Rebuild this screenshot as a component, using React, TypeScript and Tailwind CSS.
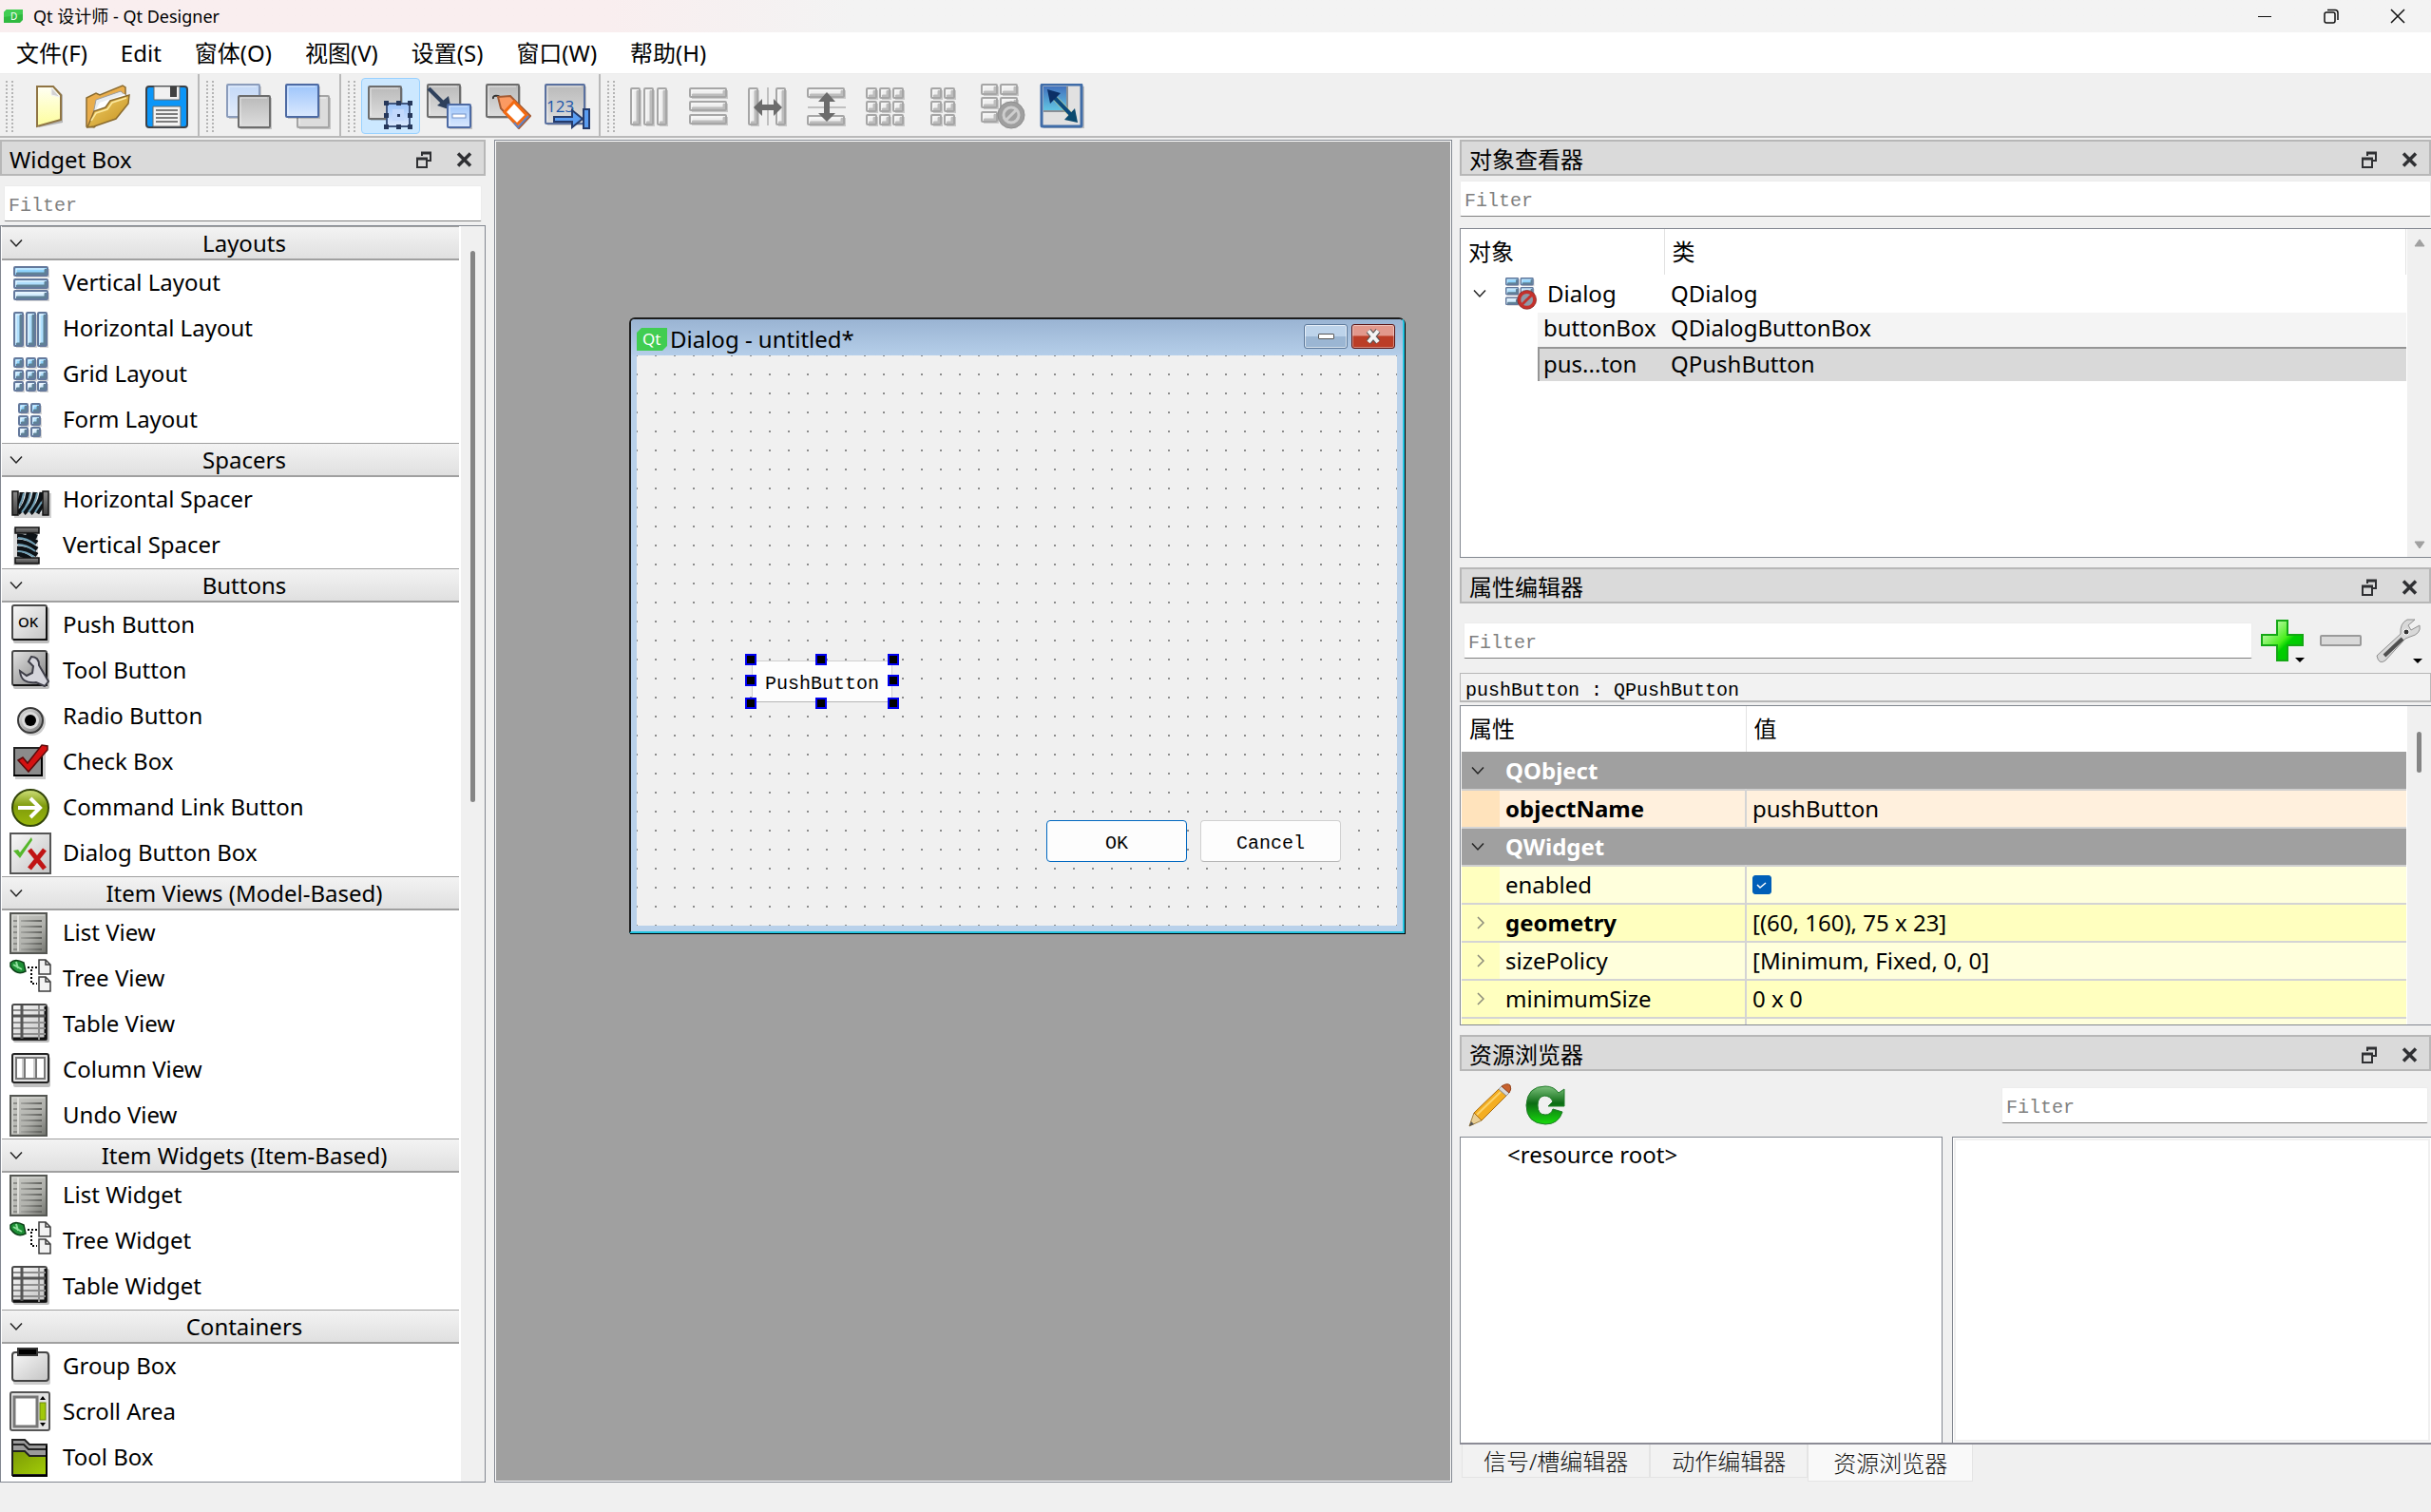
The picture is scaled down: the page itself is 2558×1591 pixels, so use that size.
import { useState } from "react";
import type { ReactNode } from "react";

type Rect = [number, number, number, number];

type Tone = "blue" | "gray";

const UI_FONT = "font-['Noto_Sans','Noto_Sans_CJK_SC',sans-serif]";
const MONO_FONT = "font-['Liberation_Mono','Noto_Sans_CJK_SC',monospace]";

function SharedGradients() {
  return (
    <svg className="absolute" width="0" height="0" aria-hidden="true">
      <defs>
        <linearGradient id="grayTile" x1="0" y1="0" x2="0" y2="1">
          <stop offset="0" stopColor="#b9b9b9" />
          <stop offset="1" stopColor="#dedede" />
        </linearGradient>
        <linearGradient id="blueTile" x1="0" y1="0" x2="0" y2="1">
          <stop offset="0" stopColor="#9cc4fb" />
          <stop offset="1" stopColor="#dbe9fe" />
        </linearGradient>
        <linearGradient id="paleBlueTile" x1="0" y1="0" x2="0" y2="1">
          <stop offset="0" stopColor="#c3d8f7" />
          <stop offset="1" stopColor="#e2ecfb" />
        </linearGradient>
        <linearGradient id="button" x1="0" y1="0" x2="1" y2="1">
          <stop offset="0" stopColor="#f8f8f8" />
          <stop offset="1" stopColor="#c4c4c4" />
        </linearGradient>
        <linearGradient id="darkButton" x1="0" y1="0" x2="1" y2="1">
          <stop offset="0" stopColor="#e4e4e4" />
          <stop offset="1" stopColor="#7d7d7d" />
        </linearGradient>
        <linearGradient id="paper" x1="0" y1="0" x2="0" y2="1">
          <stop offset="0" stopColor="#fffff4" />
          <stop offset="1" stopColor="#fdfd9b" />
        </linearGradient>
        <linearGradient id="folder" x1="0" y1="0" x2="1" y2="1">
          <stop offset="0" stopColor="#f2d16b" />
          <stop offset="1" stopColor="#c48f1c" />
        </linearGradient>
        <linearGradient id="listFill" x1="0" y1="0" x2="1" y2="1">
          <stop offset="0" stopColor="#c9cac5" />
          <stop offset="0.6" stopColor="#b0b1ac" />
          <stop offset="1" stopColor="#70726c" />
        </linearGradient>
        <linearGradient id="listLine" x1="0" y1="0" x2="1" y2="0">
          <stop offset="0" stopColor="#a2a39f" />
          <stop offset="1" stopColor="#5f605c" />
        </linearGradient>
        <linearGradient id="olive" x1="0" y1="0" x2="1" y2="1">
          <stop offset="0" stopColor="#7b9a06" />
          <stop offset="1" stopColor="#a3cd07" />
        </linearGradient>
        <linearGradient id="orb" x1="0" y1="0" x2="0" y2="1">
          <stop offset="0" stopColor="#cfe07a" />
          <stop offset="0.45" stopColor="#7f9b0c" />
          <stop offset="1" stopColor="#9ab80b" />
        </linearGradient>
        <linearGradient id="plus" x1="0" y1="0" x2="1" y2="1">
          <stop offset="0.1" stopColor="#d4fbc4" />
          <stop offset="0.5" stopColor="#48ee1b" />
          <stop offset="0.6" stopColor="#00cf00" />
          <stop offset="1" stopColor="#00c000" />
        </linearGradient>
        <linearGradient id="reload" x1="0" y1="0" x2="0" y2="1">
          <stop offset="0" stopColor="#7cc07c" />
          <stop offset="0.45" stopColor="#0c6c14" />
          <stop offset="1" stopColor="#18dc0c" />
        </linearGradient>
        <linearGradient id="steel" x1="0" y1="0" x2="0" y2="1">
          <stop offset="0" stopColor="#8a8a8a" />
          <stop offset="1" stopColor="#404040" />
        </linearGradient>
        <linearGradient id="sky" x1="0" y1="0" x2="0" y2="1">
          <stop offset="0" stopColor="#4272bd" />
          <stop offset="1" stopColor="#63c7e4" />
        </linearGradient>
      </defs>
    </svg>
  );
}

/* Bevelled cells used by all the layout icons */
function Cells({ rects, tone }: { rects: Rect[]; tone: Tone }) {
  const blue = tone === "blue";
  return (
    <>
      {rects.map(([x, y, w, h]) => {
        const fill = blue ? (y < 14 && h < 20 ? "#8fd4fd" : y < 26 ? "#afdffd" : "#d4edfe") : "#efefef";
        return (
          <g key={`${x}-${y}`}>
            <rect x={x + 2} y={y + 2} width={w} height={h} fill="#000" opacity="0.16" />
            <rect x={x} y={y} width={w} height={h} rx="1" fill={fill} />
            <path
              d={`M${x + 2} ${y + h - 2}H${x + w - 2}V${y + 2}`}
              fill="none"
              stroke={blue ? "#5f8196" : "#bcbcbc"}
              strokeWidth="3"
            />
            <path
              d={`M${x + 2} ${y + h - 3}V${y + 2}H${x + w - 3}`}
              fill="none"
              stroke="#fff"
              strokeWidth="1"
              opacity="0.8"
            />
            <rect
              x={x}
              y={y}
              width={w}
              height={h}
              rx="1"
              fill="none"
              stroke={blue ? "#64799c" : "#a6a6a6"}
              strokeWidth="2"
            />
          </g>
        );
      })}
    </>
  );
}

function grid(xs: number[], ys: number[], w: number, h: number): Rect[] {
  return ys.flatMap((y) => xs.map((x): Rect => [x, y, w, h]));
}

function Tile({ x, y, s, fill, stroke }: { x: number; y: number; s: number; fill: string; stroke: string }) {
  return (
    <>
      <rect x={x + 3} y={y + 3} width={s - 2} height={s - 2} fill="#000" opacity="0.18" />
      <rect x={x + 1} y={y + 1} width={s - 2} height={s - 2} rx="1" fill={fill} stroke={stroke} strokeWidth="2" />
      <path d={`M${x + 3} ${y + s - 4}V${y + 3}H${x + s - 4}`} fill="none" stroke="#fff" opacity="0.6" />
    </>
  );
}

const toolIcons: Record<string, ReactNode> = {
  new: (
    <>
      <path d="M14 5H32L39 12V41L14 46Z" fill="#000" opacity="0.25" />
      <path d="M12 3H29L37 12V38L12 45Z" fill="url(#paper)" stroke="#8f7443" strokeWidth="2" />
      <path d="M27 4V12L36 14Z" fill="#d2d2d2" stroke="#f4f4f4" />
    </>
  ),
  open: (
    <>
      <path d="M2 45V15L12 10L16 12L40 2L43 4V12L10 46Z" fill="#e9ad4c" stroke="#8a6b2f" strokeWidth="1.5" />
      <path d="M9 32L12 17L38 8L44 13L40 20Z" fill="#e8ecf0" stroke="#9b9b9b" />
      <path d="M11 29L16 20L42 11L44 14Z" fill="#fff" />
      <path d="M3 46L10 29L22 25L27 18L47 12L46 21L33 37L10 45Z" fill="url(#folder)" stroke="#8a6b2f" strokeWidth="1.5" />
      <path d="M7 39L12 31L24 27L29 20L44 15" fill="none" stroke="#fbe9a0" strokeWidth="1.5" />
    </>
  ),
  save: (
    <>
      <rect x="3" y="3" width="43" height="43" rx="3" fill="#0c96f8" stroke="#3c4147" strokeWidth="2" />
      <path d="M11 3H38V17H11Z" fill="#f1f1f1" stroke="#6b6b6b" />
      <rect x="28" y="3" width="7" height="11" fill="#414141" />
      <path d="M10 24H39V45H10Z" fill="#f3f3f3" stroke="#6b6b6b" />
      <path d="M13 28H36M13 32H36M13 36H36M13 40H36" stroke="#555" strokeWidth="1.5" />
    </>
  ),
  lower: (
    <>
      <Tile x={0} y={0} s={36} fill="url(#paleBlueTile)" stroke="#8b9cbb" />
      <Tile x={12} y={12} s={35} fill="url(#grayTile)" stroke="#6d6d6d" />
    </>
  ),
  raise: (
    <>
      <Tile x={12} y={12} s={35} fill="#dcdcdc" stroke="#a5a5a5" />
      <Tile x={0} y={0} s={36} fill="url(#blueTile)" stroke="#4d6aa3" />
    </>
  ),
  widgets: (
    <>
      <Tile x={0} y={2} s={36} fill="url(#grayTile)" stroke="#6d6d6d" />
      <rect x="20" y="21" width="24" height="24" fill="url(#blueTile)" stroke="#3f567f" strokeWidth="2" />
      {[17, 30, 42].map((x) =>
        [18, 31, 43].map((y) => (
          <rect key={`${x}${y}`} x={x} y={y} width="5" height="5" fill="#26385b" />
        ))
      )}
      <rect x="26" y="27" width="12" height="12" fill="#c3d9fc" />
      <rect x="31" y="32" width="3" height="3" fill="#26385b" />
    </>
  ),
  signals: (
    <>
      <Tile x={0} y={0} s={36} fill="url(#grayTile)" stroke="#6d6d6d" />
      <path d="M2 5L17 20" stroke="#2e405c" strokeWidth="4" />
      <path d="M23 13L26 28L11 23Z" fill="#2e405c" />
      <Tile x={21} y={21} s={26} fill="url(#blueTile)" stroke="#4d6aa3" />
      <rect x="27" y="32" width="14" height="4" fill="#fff" stroke="#7292c8" />
    </>
  ),
  buddies: (
    <>
      <Tile x={0} y={0} s={36} fill="url(#grayTile)" stroke="#6d6d6d" />
      <path d="M8 16Q7 12 13 13Q18 15 20 21" fill="none" stroke="#333" strokeWidth="2" />
      <path d="M13 14L26 13L47 34L35 47L16 26Z" fill="#fb9a62" stroke="#a35a33" strokeWidth="2" />
      <path d="M30 19L43 33L33 43L20 30Z" fill="#fff" stroke="#f36a12" strokeWidth="3" />
      <path d="M45 34L34 46L30 41" fill="none" stroke="#5f83c4" strokeWidth="2" />
    </>
  ),
  tabs: (
    <>
      <Tile x={0} y={0} s={43} fill="url(#grayTile)" stroke="#59709f" />
      <text x="2" y="30" fontSize="17" fontFamily="Open Sans" fill="#1a55a9">
        123
      </text>
      <path d="M10 35H29V28L40 37L29 46V40H10Z" fill="#5a9df2" stroke="#243b6c" strokeWidth="2" />
      <rect x="41" y="27" width="6" height="20" fill="#5a9df2" stroke="#243b6c" strokeWidth="2" />
    </>
  ),
  horizontal: <Cells tone="gray" rects={grid([4, 18, 32], [5], 9, 38)} />,
  vertical: <Cells tone="gray" rects={grid([4], [5, 19, 33], 38, 9)} />,
  splitH: (
    <>
      <Cells tone="gray" rects={grid([4, 33], [5], 9, 38)} />
      <path d="M24 4V44" stroke="#8f8f8f" />
      <path d="M9 25L18 16V22H30V16L39 25L30 34V28H18V34Z" fill="#6b6b6b" />
    </>
  ),
  splitV: (
    <>
      <Cells tone="gray" rects={grid([4], [5, 34], 38, 9)} />
      <path d="M4 25H44" stroke="#8f8f8f" />
      <path d="M24 9L33 19H27V31H33L24 40L15 31H21V19H15Z" fill="#6b6b6b" />
    </>
  ),
  gridLayout: <Cells tone="gray" rects={grid([4, 18, 32], [5, 19, 33], 10, 10)} />,
  formLayout: <Cells tone="gray" rects={grid([10, 24], [5, 19, 33], 10, 10)} />,
  breakLayout: (
    <>
      <Cells tone="gray" rects={[[1, 1, 16, 10], [21, 1, 17, 10], [1, 15, 16, 10], [21, 15, 17, 10], [1, 30, 16, 10]]} />
      <circle cx="32" cy="33" r="14" fill="#9f9f9f" stroke="#8e8e8e" />
      <circle cx="32" cy="33" r="8" fill="none" stroke="#cdcdcd" strokeWidth="3" />
      <path d="M26 39L38 27" stroke="#cdcdcd" strokeWidth="3" />
    </>
  ),
  adjust: (
    <>
      <rect x="4" y="3" width="43" height="44" fill="#000" opacity="0.2" />
      <rect x="2" y="1" width="42" height="44" rx="1" fill="#e1e1e1" stroke="#3f6ca8" strokeWidth="3" />
      <rect x="4" y="3" width="25" height="26" fill="url(#sky)" />
      <path d="M29 3V29H4" fill="none" stroke="#8a8f96" strokeWidth="2" />
      <path d="M12 11L37 37" stroke="#e7e07a" strokeWidth="6" opacity="0.5" />
      <path d="M12 11L37 37" stroke="#0b4a7e" strokeWidth="4" />
      <path d="M8 6L22 10L11 21Z" fill="#0c2f66" />
      <path d="M40 41L26 38L37 26Z" fill="#0b4a6e" />
    </>
  ),
};

const listIcon = (
  <>
    <rect x="1" y="1" width="38" height="42" fill="url(#listFill)" stroke="#555753" strokeWidth="2" />
    <path d="M3 41V3H37" fill="none" stroke="#dcddd9" />
    <path d="M4 9H8M4 15H8M4 21H8M4 27H8M4 33H8M4 39H8" stroke="#8b8c88" strokeWidth="2" />
    <path d="M12 9.1L34 9M12 15.1L34 15M12 21.1L34 21M12 27.1L34 27M12 33.1L34 33M12 39.1L34 39" stroke="url(#listLine)" strokeWidth="2" />
    <path d="M9 3V41" stroke="#e8e9e5" strokeWidth="1.5" />
  </>
);

const treeIcon = (
  <>
    <path d="M1 5Q6 0 15 5L17 14Q8 19 1 9Z" fill="#1d8f35" stroke="#0c3f17" strokeWidth="1.5" />
    <path d="M4 7L13 12M7 4L9 11" stroke="#8fe09c" strokeWidth="2" />
    <path d="M19 10H29M23 12V27H29" fill="none" stroke="#000" strokeWidth="2" strokeDasharray="2 2" />
    <path d="M31 2H38L43 7V17H31Z" fill="#f2f2f2" stroke="#3d3d3d" strokeWidth="1.5" />
    <path d="M31 20H38L43 25V35H31Z" fill="#f2f2f2" stroke="#3d3d3d" strokeWidth="1.5" />
    <path d="M38 2V7H43M38 20V25H43" fill="none" stroke="#3d3d3d" strokeWidth="1.5" />
  </>
);

const tableIcon = (
  <>
    <rect x="4" y="3" width="38" height="38" rx="2" fill="#000" opacity="0.25" />
    <rect x="3" y="1" width="36" height="37" rx="2" fill="url(#button)" stroke="#4a4a4a" strokeWidth="2" />
    <path d="M4 37H38V3" fill="none" stroke="#111" strokeWidth="3" />
    <path d="M4 7H38M4 20H38M4 26H38M4 32H38M31 2V38" stroke="#8d8d8d" strokeWidth="2" />
    <path d="M13 2V37M4 13H38" stroke="#555" strokeWidth="3" />
  </>
);

const widgetIcons: Record<string, ReactNode> = {
  vertical: <Cells tone="blue" rects={grid([5], [5, 18, 30], 35, 9)} />,
  horizontal: <Cells tone="blue" rects={grid([5, 18, 30], [5], 9, 35)} />,
  grid: <Cells tone="blue" rects={grid([5, 18, 30], [5, 18, 30], 9, 9)} />,
  form: <Cells tone="blue" rects={grid([10, 23], [5, 18, 30], 9, 9)} />,
  hspacer: (
    <>
      <rect x="5" y="15" width="39" height="26" fill="#000" opacity="0.18" />
      <path d="M9 14H35V36H9Z" fill="#e8eef1" />
      <path
        d="M9 28Q13 20 13 14M9 36Q18 28 20 14M15 36Q25 28 27 14M22 36Q32 28 34 14M29 36L35 26"
        fill="none"
        stroke="#0d1216"
        strokeWidth="5"
      />
      <path
        d="M10 29Q14 22 15 15M13 35Q20 27 22 15M20 35Q27 27 29 15M27 35L34 24"
        fill="none"
        stroke="#6f9fb5"
        strokeWidth="2"
      />
      <rect x="3" y="13" width="6" height="25" fill="url(#steel)" stroke="#111" strokeWidth="1.5" />
      <rect x="35" y="13" width="6" height="25" fill="url(#steel)" stroke="#111" strokeWidth="1.5" />
    </>
  ),
  vspacer: (
    <>
      <rect x="4" y="4" width="26" height="39" fill="#000" opacity="0.14" />
      <path d="M8 9H29V35H8Z" fill="#e8eef1" />
      <path
        d="M8 12Q18 12 29 19M8 18Q18 18 29 26M8 25Q18 25 29 32M8 31Q14 31 22 36M18 9L29 13"
        fill="none"
        stroke="#0d1216"
        strokeWidth="5"
      />
      <path d="M9 14Q18 14 27 21M9 21Q18 21 27 28M9 28Q17 28 26 34" fill="none" stroke="#6f9fb5" strokeWidth="2" />
      <rect x="6" y="3" width="25" height="6" fill="url(#steel)" stroke="#111" strokeWidth="1.5" />
      <rect x="6" y="35" width="25" height="6" fill="url(#steel)" stroke="#111" strokeWidth="1.5" />
    </>
  ),
  push: (
    <>
      <rect x="4" y="3" width="38" height="38" rx="2" fill="#000" opacity="0.25" />
      <rect x="3" y="1" width="36" height="36" rx="2" fill="url(#button)" stroke="#4a4a4a" strokeWidth="2" />
      <path d="M4 37H39V3" fill="none" stroke="#111" strokeWidth="2" />
      <text x="9" y="24" fontSize="15" fontFamily="Noto Sans" fontWeight="500" fill="#000">
        OK
      </text>
    </>
  ),
  tool: (
    <>
      <rect x="4" y="3" width="38" height="38" rx="2" fill="#000" opacity="0.25" />
      <rect x="3" y="1" width="36" height="36" rx="2" fill="url(#darkButton)" stroke="#4a4a4a" strokeWidth="2" />
      <path d="M4 37H39V3" fill="none" stroke="#111" strokeWidth="2" />
      <path
        d="M23 7Q31 7 31 16L41 33L37 38L28 34Q12 36 11 22L18 27L24 24L25 17L20 12Z"
        fill="#d5d5dc"
        stroke="#3e3e48"
        strokeWidth="2"
      />
    </>
  ),
  radio: (
    <>
      <circle cx="24" cy="28" r="14" fill="#000" opacity="0.2" />
      <circle cx="22" cy="26" r="13" fill="url(#darkButton)" stroke="#3a3a3a" strokeWidth="2" />
      <circle cx="22" cy="26" r="9" fill="#dcdcdc" />
      <circle cx="22" cy="26" r="6" fill="#000" />
    </>
  ),
  check: (
    <>
      <rect x="6" y="8" width="32" height="32" fill="#000" opacity="0.2" />
      <rect x="5" y="7" width="29" height="29" fill="#8b8b8b" stroke="#222" strokeWidth="2" />
      <path d="M4 36H34V8" fill="none" stroke="#000" strokeWidth="2" />
      <path d="M9 20L14 17L19 23L34 4L40 5L40 9L20 32Z" fill="#d41111" stroke="#5a0a0a" strokeWidth="1.5" />
    </>
  ),
  command: (
    <>
      <circle cx="22" cy="22" r="19" fill="url(#orb)" stroke="#33450a" strokeWidth="2" />
      <path d="M9 22H31M22 12L32 22L22 32" fill="none" stroke="#fff" strokeWidth="4" />
    </>
  ),
  dialogButtons: (
    <>
      <rect x="1" y="1" width="42" height="42" fill="url(#button)" stroke="#555" strokeWidth="2" />
      <path d="M4 19L9 18L11 21L23 5L24 8L11 27Z" fill="#55b72a" />
      <path d="M21 18L37 38M37 18L21 38" stroke="#c01414" strokeWidth="5" />
    </>
  ),
  list: listIcon,
  tree: treeIcon,
  table: tableIcon,
  column: (
    <>
      <rect x="4" y="8" width="39" height="32" rx="2" fill="#000" opacity="0.25" />
      <rect x="3" y="5" width="38" height="30" rx="2" fill="#e2e2e2" stroke="#222" strokeWidth="2" />
      <rect x="7" y="9" width="30" height="22" fill="#fff" stroke="#777" strokeWidth="2" />
      <path d="M16 9V31M28 9V31" stroke="#777" strokeWidth="2" />
      <path d="M14 10V30M26 10V30" stroke="#ccc" strokeWidth="2" />
    </>
  ),
  group: (
    <>
      <rect x="4" y="9" width="39" height="32" rx="2" fill="#000" opacity="0.2" />
      <rect x="3" y="7" width="38" height="30" rx="3" fill="url(#button)" stroke="#444" strokeWidth="2" />
      <path d="M9 3H29V10H9Z" fill="#000" stroke="#333" strokeWidth="2" />
    </>
  ),
  scroll: (
    <>
      <rect x="1" y="1" width="41" height="40" rx="2" fill="#e2e2e2" stroke="#555" strokeWidth="2" />
      <rect x="5" y="6" width="24" height="31" fill="#fff" stroke="#777" strokeWidth="3" />
      <path d="M35 5L38 9H32ZM35 37L38 33H32Z" fill="#000" />
      <rect x="32" y="12" width="6" height="18" fill="#a0c80a" stroke="#6d8708" />
    </>
  ),
  toolbox: (
    <>
      <path d="M3 3H16L21 8H39V20H3Z" fill="#9b9b9b" stroke="#222" strokeWidth="2" />
      <path d="M3 8H15L20 13H39" fill="none" stroke="#222" strokeWidth="2" />
      <path d="M3 15H16L21 20H39V40H3Z" fill="url(#olive)" stroke="#222" strokeWidth="2" />
      <path d="M3 41H39V9" fill="none" stroke="#000" strokeWidth="2" />
    </>
  ),
};

const menus = ["文件(F)", "Edit", "窗体(O)", "视图(V)", "设置(S)", "窗口(W)", "帮助(H)"];

const toolbars = [
  [
    { icon: "new", label: "New" },
    { icon: "open", label: "Open" },
    { icon: "save", label: "Save" },
  ],
  [
    { icon: "lower", label: "Send to Back" },
    { icon: "raise", label: "Bring to Front" },
  ],
  [
    { icon: "widgets", label: "Edit Widgets", checked: true },
    { icon: "signals", label: "Edit Signals/Slots" },
    { icon: "buddies", label: "Edit Buddies" },
    { icon: "tabs", label: "Edit Tab Order" },
  ],
  [
    { icon: "horizontal", label: "Lay Out Horizontally" },
    { icon: "vertical", label: "Lay Out Vertically" },
    { icon: "splitH", label: "Lay Out Horizontally in Splitter" },
    { icon: "splitV", label: "Lay Out Vertically in Splitter" },
    { icon: "gridLayout", label: "Lay Out in a Grid" },
    { icon: "formLayout", label: "Lay Out in a Form" },
    { icon: "breakLayout", label: "Break Layout" },
    { icon: "adjust", label: "Adjust Size" },
  ],
];

const widgetGroups = [
  {
    title: "Layouts",
    items: [
      ["vertical", "Vertical Layout"],
      ["horizontal", "Horizontal Layout"],
      ["grid", "Grid Layout"],
      ["form", "Form Layout"],
    ],
  },
  {
    title: "Spacers",
    items: [
      ["hspacer", "Horizontal Spacer"],
      ["vspacer", "Vertical Spacer"],
    ],
  },
  {
    title: "Buttons",
    items: [
      ["push", "Push Button"],
      ["tool", "Tool Button"],
      ["radio", "Radio Button"],
      ["check", "Check Box"],
      ["command", "Command Link Button"],
      ["dialogButtons", "Dialog Button Box"],
    ],
  },
  {
    title: "Item Views (Model-Based)",
    items: [
      ["list", "List View"],
      ["tree", "Tree View"],
      ["table", "Table View"],
      ["column", "Column View"],
      ["list", "Undo View"],
    ],
  },
  {
    title: "Item Widgets (Item-Based)",
    items: [
      ["list", "List Widget"],
      ["tree", "Tree Widget"],
      ["table", "Table Widget"],
    ],
  },
  {
    title: "Containers",
    items: [
      ["group", "Group Box"],
      ["scroll", "Scroll Area"],
      ["toolbox", "Tool Box"],
    ],
  },
];

const bottomTabs = ["信号/槽编辑器", "动作编辑器", "资源浏览器"];

function ChevronDown() {
  return (
    <svg width="14" height="10" viewBox="0 0 14 10" aria-hidden="true">
      <path d="M1 1.5L7 8L13 1.5" fill="none" stroke="#222" strokeWidth="1.5" />
    </svg>
  );
}

function ChevronRight() {
  return (
    <svg width="8" height="14" viewBox="0 0 8 14" aria-hidden="true">
      <path d="M1 1L7 7L1 13" fill="none" stroke="#8a8a7a" strokeWidth="1.5" />
    </svg>
  );
}

function DockTitle({ title }: { title: string }) {
  return (
    <div className="flex h-[38px] shrink-0 items-center border-2 border-[#b7b7b7] bg-[#dadada] pt-[3px] pr-3 pl-2">
      <h2 className="flex-1 text-2xl leading-8">{title}</h2>
      <button aria-label={`Float ${title}`} className="mr-[25px]">
        <svg width="17" height="18" viewBox="0 0 17 18" aria-hidden="true">
          <path d="M6 5V2H15V10H12" fill="none" stroke="#2f3033" strokeWidth="2" />
          <path d="M5 2H16" stroke="#2f3033" strokeWidth="3" />
          <rect x="1" y="8" width="10" height="9" fill="none" stroke="#2f3033" strokeWidth="2" />
          <path d="M0 8H12" stroke="#2f3033" strokeWidth="3" />
        </svg>
      </button>
      <button aria-label={`Close ${title}`}>
        <svg width="17" height="16" viewBox="0 0 17 16" aria-hidden="true">
          <path d="M2 1.5L15 14.5M15 1.5L2 14.5" stroke="#2f3033" strokeWidth="3.5" />
        </svg>
      </button>
    </div>
  );
}

function FilterInput({ label, className = "" }: { label: string; className?: string }) {
  const [value, setValue] = useState("");

  return (
    <input
      type="text"
      aria-label={label}
      placeholder="Filter"
      value={value}
      onChange={(e) => setValue(e.target.value)}
      className={`h-[38px] min-w-0 rounded-[2px] border border-[#ececec] border-b-[#808080] bg-white px-1 pt-[5px] text-xl placeholder:text-[#808080] ${MONO_FONT} ${className}`}
    />
  );
}

function TitleBar() {
  return (
    <header className="flex h-[34px] shrink-0 items-center bg-[#f3f3f3] bg-linear-to-r from-[#f9eeef] from-0% via-[#f9eeef] via-25% to-[#f3f3f3] to-35% pl-1">
      <svg width="20" height="14" viewBox="0 0 20 14" aria-hidden="true">
        <path d="M3 0H20V11L17 14H0V3Z" fill="#2fb93f" />
        <path d="M3 0H20V5L0 8V3Z" fill="#41cd52" />
        <text x="7" y="11" fontSize="10" fontFamily="Noto Sans" fill="#fff">
          D
        </text>
      </svg>
      <h1 className="ml-[11px] flex-1 text-lg">Qt 设计师 - Qt Designer</h1>
      <div className="flex h-full items-center">
        <button aria-label="Minimize" className="flex h-full w-[70px] items-center justify-center">
          <svg width="14" height="14" viewBox="0 0 14 14" aria-hidden="true">
            <path d="M0 7.5H14" stroke="#111" />
          </svg>
        </button>
        <button aria-label="Restore" className="flex h-full w-[70px] items-center justify-center">
          <svg width="16" height="16" viewBox="0 0 16 16" aria-hidden="true">
            <rect x="1" y="4" width="11" height="11" rx="2" fill="none" stroke="#111" strokeWidth="1.5" />
            <path d="M4 1.5H12Q15 1.5 15 4.5V12" fill="none" stroke="#111" strokeWidth="1.5" />
          </svg>
        </button>
        <button aria-label="Close" className="flex h-full w-[70px] items-center justify-center">
          <svg width="16" height="16" viewBox="0 0 16 16" aria-hidden="true">
            <path d="M1 1L15 15M15 1L1 15" stroke="#111" strokeWidth="1.5" />
          </svg>
        </button>
      </div>
    </header>
  );
}

function ToolBars() {
  return (
    <div className="flex h-[67px] shrink-0 border-b-2 border-[#b9b9b9]">
      {toolbars.map((bar, i) => (
        <div
          key={i}
          role="toolbar"
          className={`flex items-center pt-[2px] pl-[6px] ${
            i < toolbars.length - 1 ? "mr-px border-r-2 border-[#b9b9b9] pr-[2px]" : "flex-1"
          }`}
        >
          <div className="mr-[6px] h-[54px] w-2 bg-[radial-gradient(circle_at_1px_1px,#b4b4b4_1px,transparent_1px)] bg-size-[6px_4px]" />
          {bar.map((tool) => (
            <button
              key={tool.icon}
              aria-label={tool.label}
              className={`flex h-[59px] w-[62px] items-center justify-center rounded-sm border ${
                "checked" in tool ? "border-[#99d1ff] bg-[#cce8ff]" : "border-transparent"
              }`}
            >
              <svg width="48" height="48" viewBox="0 0 48 48" aria-hidden="true">
                {toolIcons[tool.icon]}
              </svg>
            </button>
          ))}
        </div>
      ))}
    </div>
  );
}

function WidgetBox() {
  return (
    <aside className="flex w-[511px] shrink-0 flex-col">
      <DockTitle title="Widget Box" />
      <FilterInput label="Filter widgets" className="mx-1 mt-[10px]" />
      <div className="mt-[4px] flex min-h-0 flex-1 border border-[#828790] bg-white">
        <div className="flex-1 overflow-hidden pl-px">
          {widgetGroups.map((group) => (
            <section key={group.title}>
              <button className="flex h-9 w-full items-center border-t border-b-2 border-[#a0a0a0] bg-linear-to-b from-[#f3f3f3] to-[#e0e0e0] pl-2">
                <ChevronDown />
                <span className="flex-1 pl-[7px] text-center text-2xl leading-8">{group.title}</span>
              </button>
              <ul>
                {group.items.map(([icon, label]) => (
                  <li key={label} className="flex h-12 items-center gap-3 pl-2">
                    <svg width="44" height="44" viewBox="0 0 44 44" aria-hidden="true">
                      {widgetIcons[icon]}
                    </svg>
                    <span className="pb-[2px] text-2xl leading-8">{label}</span>
                  </li>
                ))}
              </ul>
            </section>
          ))}
        </div>
        <div className="ml-[2px] w-[25px] bg-[#f0f0f0] pt-[26px] pl-[10px]">
          <div className="h-[580px] w-[5px] rounded-full bg-[#858585]" />
        </div>
      </div>
    </aside>
  );
}

function Handle({ className }: { className: string }) {
  return <span className={`absolute size-3 border-2 border-[#0000f0] bg-black ${className}`} />;
}

function DesignForm() {
  return (
    <div className="absolute top-[186px] left-[141px] flex h-[648px] w-[816px] flex-col rounded-t-md border-2 border-[#1c1c1c] border-r-[#23c4e0] border-b-[#23c4e0] bg-[#b9d1ea] px-[6px] pb-[6px] shadow-[1px_1px_0_#000]">
      <div className="-mx-[6px] flex h-[38px] shrink-0 items-center rounded-t-sm bg-linear-to-b from-[#9ab4d3] to-[#b5cee9] px-[6px] pt-1">
        <svg width="32" height="24" viewBox="0 0 32 24" aria-hidden="true">
          <path d="M5 0H32V19L27 24H0V5Z" fill="#41cd52" />
          <text x="6" y="18" fontSize="17" fontFamily="Noto Sans" fill="#fff">
            Qt
          </text>
        </svg>
        <h2 className="ml-[3px] flex-1 text-2xl leading-8">Dialog - untitled*</h2>
        <div className="mr-[2px] flex gap-1 pb-[6px]">
          <button
            aria-label="Minimize form"
            className="flex h-[26px] w-[46px] items-center justify-center rounded-[3px] border border-[#5f7b9c] bg-linear-to-b from-[#bdd3ea] from-50% to-[#9bb6d3] to-50% inset-ring inset-ring-white/60"
          >
            <span className="h-[6px] w-[17px] rounded-[1px] border border-[#555] bg-white" />
          </button>
          <button
            aria-label="Close form"
            className="flex h-[26px] w-[46px] items-center justify-center rounded-[3px] border border-[#5a1414] bg-linear-to-b from-[#e2988c] from-45% to-[#bb3d27] to-50% inset-ring inset-ring-white/40"
          >
            <svg width="18" height="16" viewBox="0 0 18 16" aria-hidden="true">
              <path d="M4 2L14 14M14 2L4 14" stroke="#555" strokeWidth="6" />
              <path d="M4 2L14 14M14 2L4 14" stroke="#f4f4f4" strokeWidth="4" />
            </svg>
          </button>
        </div>
      </div>
      <div className={`relative flex-1 bg-[#f0f0f0] bg-[radial-gradient(circle,#8c8c8c_1px,transparent_1px)] bg-size-[20px_20px] bg-position-[-10px_-10px] text-xl ${MONO_FONT}`}>
        <div className="absolute top-[320px] left-[120px] h-[46px] w-[150px] p-[1px]">
          <button className="h-full w-full rounded-[3px] border border-[#d0d0d0] border-b-[#b5b5b5] bg-[#fdfdfd] pt-[6px]">PushButton</button>
          <Handle className="-top-[6px] -left-[6px]" />
          <Handle className="-top-[6px] left-[68px]" />
          <Handle className="-top-[6px] -right-[6px]" />
          <Handle className="top-4 -left-[6px]" />
          <Handle className="top-4 -right-[6px]" />
          <Handle className="-bottom-[6px] -left-[6px]" />
          <Handle className="-bottom-[6px] left-[68px]" />
          <Handle className="-right-[6px] -bottom-[6px]" />
        </div>
        <div className="absolute top-[489px] left-[431px] flex gap-[14px]">
          <button className="h-[44px] w-[148px] rounded-[4px] border border-[#0067c0] bg-[#fdfdfd] pt-[6px]">OK</button>
          <button className="h-[44px] w-[148px] rounded-[4px] border border-[#d0d0d0] border-b-[#b5b5b5] bg-[#fdfdfd] pt-[6px]">Cancel</button>
        </div>
      </div>
    </div>
  );
}

function ObjectInspector() {
  return (
    <section className="flex min-h-0 flex-[440_1_0%] flex-col">
      <DockTitle title="对象查看器" />
      <FilterInput label="Filter objects" className="mt-[5px]" />
      <div className="mt-[12px] flex min-h-0 flex-1 border border-r-0 border-[#828790] bg-white">
        <div className="flex-1 overflow-hidden">
          <table className="w-full table-fixed border-collapse text-left text-2xl leading-8">
            <colgroup>
              <col className="w-[214px]" />
              <col />
            </colgroup>
            <thead>
              <tr className="h-12">
                <th className="border-r border-[#e2e2e2] pl-2 font-normal">对象</th>
                <th className="border-r border-[#e2e2e2] pl-2 font-normal">类</th>
              </tr>
            </thead>
            <tbody>
              <tr className="h-10">
                <td className="p-0">
                  <div className="flex items-center pl-[13px]">
                    <ChevronDown />
                    <svg width="34" height="34" viewBox="0 0 48 48" className="mr-[10px] ml-[20px]" aria-hidden="true">
                      <Cells tone="blue" rects={[[1, 1, 18, 10], [23, 1, 18, 10], [1, 15, 18, 10], [23, 15, 18, 10], [1, 30, 18, 10]]} />
                      <circle cx="32" cy="33" r="14" fill="#c4302b" stroke="#7e2420" />
                      <circle cx="32" cy="33" r="9" fill="#8f9aa8" />
                      <path d="M25 40L39 26" stroke="#c4302b" strokeWidth="4" />
                    </svg>
                    Dialog
                  </div>
                </td>
                <td className="p-0 pl-[7px]">QDialog</td>
              </tr>
              <tr>
                <td className="p-0 pl-[81px]">
                  <div className="h-9 bg-[#f4f4f4] pl-[6px]">buttonBox</div>
                </td>
                <td className="p-0">
                  <div className="h-9 bg-[#f4f4f4] pl-[7px]">QDialogButtonBox</div>
                </td>
              </tr>
              <tr>
                <td className="p-0 pl-[81px]">
                  <div className="h-9 border-t-2 border-l-2 border-[#959595] bg-[#d9d9d9] pl-1">pus...ton</div>
                </td>
                <td className="p-0">
                  <div className="h-9 border-t-2 border-[#959595] bg-[#d9d9d9] pl-[7px]">QPushButton</div>
                </td>
              </tr>
            </tbody>
          </table>
        </div>
        <div className="ml-px flex w-[25px] flex-col items-center justify-between bg-[#f0f0f0] pt-[10px] pb-[8px]">
          <svg width="12" height="9" viewBox="0 0 12 9" aria-hidden="true">
            <path d="M6 1L11 8H1Z" fill="#a0a0a0" stroke="#a0a0a0" strokeLinejoin="round" />
          </svg>
          <svg width="12" height="9" viewBox="0 0 12 9" aria-hidden="true">
            <path d="M6 8L11 1H1Z" fill="#a0a0a0" stroke="#a0a0a0" strokeLinejoin="round" />
          </svg>
        </div>
      </div>
    </section>
  );
}

function DropArrow() {
  return (
    <svg width="10" height="5" viewBox="0 0 10 5" className="absolute right-0 bottom-0" aria-hidden="true">
      <path d="M0 0H10L5 5Z" fill="#000" />
    </svg>
  );
}

function GroupRow({ name }: { name: string }) {
  return (
    <tr className="h-10 border-b-2 border-[#cfcfcf] bg-[#a0a0a0]">
      <td className="p-0 pl-[10px]">
        <ChevronDown />
      </td>
      <td colSpan={2} className="p-0 pl-[6px] font-bold text-white">
        {name}
      </td>
    </tr>
  );
}

function PropertyRow({
  name,
  value,
  row,
  strip,
  bold = false,
  expandable = false,
}: {
  name: string;
  value: ReactNode;
  row: string;
  strip: string;
  bold?: boolean;
  expandable?: boolean;
}) {
  return (
    <tr className={`h-10 border-b-2 border-[#d4d4d4] ${row}`}>
      <td className={`p-0 pl-4 ${strip}`}>{expandable && <ChevronRight />}</td>
      <td className={`border-r-2 border-[#d4d4d4] p-0 pl-[6px] ${bold ? "font-bold" : ""}`}>{name}</td>
      <td className="p-0 pl-[6px]">{value}</td>
    </tr>
  );
}

function PropertyEditor() {
  const [enabled, setEnabled] = useState(true);

  return (
    <section className="flex min-h-0 flex-[482_1_0%] flex-col">
      <DockTitle title="属性编辑器" />
      <div className="flex h-[73px] shrink-0 items-center pt-[5px] pr-[9px] pl-1">
        <FilterInput label="Filter properties" className="mr-[9px] flex-1" />
        <button aria-label="Add Dynamic Property" className="relative mr-[16px]">
          <svg width="46" height="46" viewBox="0 0 46 46" aria-hidden="true">
            <path d="M17 2H28V17H44V28H28V44H17V28H1V17H17Z" fill="url(#plus)" stroke="#14a814" strokeWidth="2" />
          </svg>
          <DropArrow />
        </button>
        <button aria-label="Remove Dynamic Property" className="mr-[14px]">
          <svg width="44" height="12" viewBox="0 0 44 12" aria-hidden="true">
            <rect x="1" y="1" width="42" height="10" rx="1" fill="#d9d9d9" stroke="#9a9a9a" strokeWidth="2" />
          </svg>
        </button>
        <button aria-label="Configure Property Editor" className="relative">
          <svg width="50" height="48" viewBox="0 0 50 48" aria-hidden="true">
            <path
              d="M2 40L27 17Q26 6 34 2L42 2L35 8L38 13L47 8Q49 17 37 20L32 22L11 45Q4 50 2 40Z"
              fill="#d8d8d8"
              stroke="#8f8f8f"
            />
            <path d="M10 40L29 22" stroke="#505050" strokeWidth="4" />
            <circle cx="33" cy="15" r="3" fill="#333" stroke="#fff" />
          </svg>
          <DropArrow />
        </button>
      </div>
      <div className={`h-[31px] shrink-0 border border-b-2 border-[#b7b7b7] bg-[#f2f2f2] pt-1 pl-[5px] text-xl leading-7 ${MONO_FONT}`}>
        pushButton : QPushButton
      </div>
      <div className="mt-[3px] flex min-h-0 flex-1 border border-r-0 border-[#828790] bg-white">
        <div className="flex-1 overflow-hidden px-px">
          <table className="w-full table-fixed border-collapse text-left text-2xl leading-8">
            <colgroup>
              <col className="w-[40px]" />
              <col className="w-[259px]" />
              <col />
            </colgroup>
            <thead>
              <tr className="h-12">
                <th colSpan={2} className="border-r border-[#e2e2e2] p-0 pl-2 font-normal">
                  属性
                </th>
                <th className="p-0 pl-2 font-normal">值</th>
              </tr>
            </thead>
            <tbody>
              <GroupRow name="QObject" />
              <PropertyRow name="objectName" value="pushButton" row="bg-[#fff0dd]" strip="bg-[#ffe3bc]" bold />
              <GroupRow name="QWidget" />
              <PropertyRow
                name="enabled"
                value={
                  <label className="relative block size-5">
                    <input
                      type="checkbox"
                      aria-label="enabled"
                      checked={enabled}
                      onChange={(e) => setEnabled(e.target.checked)}
                      className="block size-5 appearance-none rounded-[3px] border border-[#868686] bg-white checked:border-[#005fb8] checked:bg-[#005fb8]"
                    />
                    <svg viewBox="0 0 20 20" className="pointer-events-none absolute inset-0" aria-hidden="true">
                      <path d="M5 10L8 13L14 8" fill="none" stroke="#fff" strokeWidth="1.5" />
                    </svg>
                  </label>
                }
                row="bg-[#ffffdc]"
                strip="bg-[#ffffbf]"
              />
              <PropertyRow name="geometry" value="[(60, 160), 75 x 23]" row="bg-[#ffffbf]" strip="bg-[#ffffbf]" bold expandable />
              <PropertyRow name="sizePolicy" value="[Minimum, Fixed, 0, 0]" row="bg-[#ffffdc]" strip="bg-[#ffffbf]" expandable />
              <PropertyRow name="minimumSize" value="0 x 0" row="bg-[#ffffbf]" strip="bg-[#ffffbf]" expandable />
              <PropertyRow name="" value="" row="bg-[#ffffdc]" strip="bg-[#ffffbf]" />
            </tbody>
          </table>
        </div>
        <div className="w-[25px] bg-[#f0f0f0] pt-[27px] pl-[10px]">
          <div className="h-[43px] w-[5px] rounded-full bg-[#858585]" />
        </div>
      </div>
    </section>
  );
}

function ResourceBrowser() {
  const [active, setActive] = useState("资源浏览器");

  return (
    <section className="flex min-h-0 flex-[471_1_0%] flex-col">
      <DockTitle title="资源浏览器" />
      <div className="flex h-[69px] shrink-0 items-center pt-[3px] pr-[3px] pl-[9px]">
        <button aria-label="Edit Resources" className="mr-[14px]">
          <svg width="46" height="46" viewBox="0 0 46 46" aria-hidden="true">
            <path d="M1 45L6 31L14 39Z" fill="#e9cf96" stroke="#a3803a" />
            <path d="M1 45L3 40L6 43Z" fill="#555" />
            <path d="M6 31L32 6L40 13L14 39Z" fill="#f4ae22" stroke="#a86c10" />
            <path d="M9 33L34 9" stroke="#fbd36b" strokeWidth="2" />
            <path d="M32 6L35 3L43 10L40 13Z" fill="#d9d9d9" stroke="#999" />
            <path d="M35 3Q41 -1 44 2Q46 6 43 10Z" fill="#c8622e" stroke="#93431c" />
          </svg>
        </button>
        <button aria-label="Reload" className="flex-1">
          <svg width="42" height="42" viewBox="0 0 42 42" aria-hidden="true">
            <path
              d="M41 4V22H24L29 17Q26 11 20 11Q13 12 13 21Q13 31 21 31Q27 31 29 25L39 28Q35 41 21 41Q1 40 1 21Q2 1 21 1Q30 1 35 8Z"
              fill="url(#reload)"
              stroke="#1f7a27"
            />
          </svg>
        </button>
        <FilterInput label="Filter resources" className="w-[449px]" />
      </div>
      <div className="flex min-h-0 flex-1 gap-[10px] border-b-2 border-[#8c8c96]">
        <ul className="w-[508px] border border-b-0 border-[#828790] bg-white pl-[49px] text-2xl leading-9">
          <li>&lt;resource root&gt;</li>
        </ul>
        <div className="flex-1 border border-r-0 border-b-0 border-[#828790] bg-white p-px">
          <div className="h-full border-2 border-[#f0f0f0]" />
        </div>
      </div>
      <div role="tablist" className="flex h-10 shrink-0 items-start pl-[2px] text-2xl leading-8 font-light">
        {bottomTabs.map((tab) => (
          <button
            key={tab}
            role="tab"
            aria-selected={tab === active}
            onClick={() => setActive(tab)}
            className={`border border-t-0 border-[#e4e4e4] pt-px text-[#111] ${
              tab === active ? "h-[39px] bg-[#f9f9f9] px-[26px]" : "h-[35px] bg-[#f2f2f2] px-[22px]"
            }`}
          >
            {tab}
          </button>
        ))}
      </div>
    </section>
  );
}

export default function App() {
  return (
    <div className={`flex h-screen flex-col overflow-hidden bg-[#f0f0f0] text-black ${UI_FONT}`}>
      <SharedGradients />
      <TitleBar />
      <nav className="flex h-[44px] shrink-0 items-center gap-px border-b border-[#ececec] bg-white">
        {menus.map((menu) => (
          <button key={menu} className="px-[17px] text-2xl leading-8">
            {menu}
          </button>
        ))}
      </nav>
      <ToolBars />
      <div className="mt-[2px] flex min-h-0 flex-1">
        <WidgetBox />
        <main className="relative mr-2 ml-[9px] flex-1 overflow-hidden border border-[#828790] bg-[#a0a0a0] inset-ring inset-ring-white">
          <DesignForm />
        </main>
        <div className="flex w-[1022px] shrink-0 flex-col gap-[10px]">
          <ObjectInspector />
          <PropertyEditor />
          <ResourceBrowser />
        </div>
      </div>
      <footer className="h-[31px] shrink-0" />
    </div>
  );
}
